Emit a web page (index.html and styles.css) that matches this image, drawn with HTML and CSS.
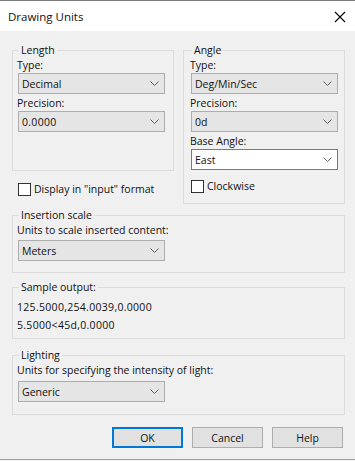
FILE: index.html
```html
<!DOCTYPE html>
<html>
<head>
<meta charset="utf-8">
<link rel="stylesheet" href="styles.css">
</head>
<body>
<div class="window">
  <div class="titlebar">
    <span class="title">Drawing Units</span>
    <svg class="close" width="12" height="12" viewBox="0 0 12 12"><path d="M1 1 L11 11 M11 1 L1 11" stroke="#000" stroke-width="1.1" fill="none"/></svg>
  </div>
  <div class="content">
    <div class="top-row">
      <div class="col">
        <fieldset class="group length">
          <legend>Length</legend>
          <div class="lbl">Type:</div>
          <div class="combo"><span>Decimal</span><svg class="chev" width="9" height="5" viewBox="0 0 9 5"><path d="M0.5 0.5 L4.5 4.5 L8.5 0.5" stroke="#606060" fill="none"/></svg></div>
          <div class="lbl gap">Precision:</div>
          <div class="combo"><span class="num">0.0000</span><svg class="chev" width="9" height="5" viewBox="0 0 9 5"><path d="M0.5 0.5 L4.5 4.5 L8.5 0.5" stroke="#606060" fill="none"/></svg></div>
        </fieldset>
        <div class="check-row left"><span class="checkbox"></span><span>Display in "input" format</span></div>
      </div>
      <fieldset class="group angle">
        <legend>Angle</legend>
        <div class="lbl">Type:</div>
        <div class="combo"><span>Deg/Min/Sec</span><svg class="chev" width="9" height="5" viewBox="0 0 9 5"><path d="M0.5 0.5 L4.5 4.5 L8.5 0.5" stroke="#606060" fill="none"/></svg></div>
        <div class="lbl gap">Precision:</div>
        <div class="combo"><span>0d</span><svg class="chev" width="9" height="5" viewBox="0 0 9 5"><path d="M0.5 0.5 L4.5 4.5 L8.5 0.5" stroke="#606060" fill="none"/></svg></div>
        <div class="lbl gap">Base Angle:</div>
        <div class="combo edit"><span>East</span><svg class="chev" width="9" height="5" viewBox="0 0 9 5"><path d="M0.5 0.5 L4.5 4.5 L8.5 0.5" stroke="#606060" fill="none"/></svg></div>
        <div class="check-row inner"><span class="checkbox"></span><span>Clockwise</span></div>
      </fieldset>
    </div>

    <fieldset class="group wide insertion">
      <legend>Insertion scale</legend>
      <div class="lbl">Units to scale inserted content:</div>
      <div class="combo"><span>Meters</span><svg class="chev" width="9" height="5" viewBox="0 0 9 5"><path d="M0.5 0.5 L4.5 4.5 L8.5 0.5" stroke="#606060" fill="none"/></svg></div>
    </fieldset>

    <fieldset class="group wide sample">
      <legend>Sample output:</legend>
      <div class="sample-line">125.5000,254.0039,0.0000</div>
      <div class="sample-line">5.5000&lt;45d,0.0000</div>
    </fieldset>

    <fieldset class="group wide lighting">
      <legend>Lighting</legend>
      <div class="lbl">Units for specifying the intensity of light:</div>
      <div class="combo"><span>Generic</span><svg class="chev" width="9" height="5" viewBox="0 0 9 5"><path d="M0.5 0.5 L4.5 4.5 L8.5 0.5" stroke="#606060" fill="none"/></svg></div>
    </fieldset>

    <div class="buttons">
      <div class="btn default">OK</div>
      <div class="btn">Cancel</div>
      <div class="btn">Help</div>
    </div>
  </div>
</div>
</body>
</html>
```

FILE: styles.css
```css
html, body {
  margin: 0;
  padding: 0;
  background: #f0f0f0;
}
.window {
  width: 355px;
  height: 460px;
  box-sizing: border-box;
  border-top: 1px solid #7a7a7a;
  border-bottom: 1px solid #a0a0a0;
  background: #f0f0f0;
  font-family: "Open Sans", "Noto Sans", sans-serif;
  font-size: 10.5px;
  color: #111;
  overflow: hidden;
}
.titlebar {
  height: 30px;
  background: #fff;
  display: flex;
  align-items: center;
  justify-content: space-between;
  padding: 0 8px 0 8px;
}
.title {
  font-size: 11.5px;
  line-height: 16px;
  padding-top: 1px;
}
.close {
  display: block;
  margin-right: 1px;
  margin-top: 2px;
}
.content {
  padding: 12px 10px 0 12px;
}
.top-row {
  display: flex;
  gap: 9px;
}
.col {
  display: flex;
  flex-direction: column;
}
.group {
  margin: 0;
  border: 1px solid #dcdcdc;
  box-sizing: border-box;
  min-width: 0;
  width: 162px;
}
.group legend {
  padding: 0 2px;
  line-height: 14px;
  margin-left: 1px;
}
.length {
  height: 128px;
  padding: 1px 4px 0 5px;
}
.angle {
  height: 161px;
  padding: 1px 5px 0 7px;
}
.wide {
  width: 333px;
  padding: 1px 4px 0 5px;
}
.insertion {
  margin-top: 4px;
  height: 65px;
}
.sample {
  margin-top: 7px;
  height: 59px;
}
.lighting {
  margin-top: 9px;
  height: 67px;
}
.lbl {
  line-height: 14px;
  margin-left: -1px;
}
.lbl.gap {
  margin-top: 2px;
}
.combo {
  margin-top: 1px;
  width: 147px;
  height: 21px;
  box-sizing: border-box;
  background: #e5e5e5;
  border: 1px solid #adadad;
  display: flex;
  align-items: center;
  justify-content: space-between;
  padding: 0 5px 0 3px;
}
.combo.edit {
  background: #fff;
  border-color: #7a7a7a;
}
.combo .chev {
  display: block;
}
.num {
  letter-spacing: 0.3px;
}
.insertion .combo, .lighting .combo {
  margin-top: 3px;
}
.lighting .combo {
  margin-top: 4px;
}
.check-row {
  display: flex;
  align-items: center;
  gap: 3px;
  line-height: 14px;
}
.check-row.left {
  margin-top: 11px;
  margin-left: 6px;
}
.check-row.inner {
  margin-top: 9px;
}
.checkbox {
  width: 13px;
  height: 13px;
  box-sizing: border-box;
  border: 1px solid #333;
  background: #fff;
}
.sample-line {
  line-height: 14px;
  margin-left: -1px;
  margin-top: 5px;
  letter-spacing: 0.3px;
}
.sample-line + .sample-line {
  margin-top: 4px;
}
.buttons {
  display: flex;
  justify-content: flex-end;
  gap: 9px;
  margin-top: 12px;
  padding-right: 2px;
}
.btn {
  width: 71px;
  height: 21px;
  box-sizing: border-box;
  background: #e1e1e1;
  border: 1px solid #adadad;
  display: flex;
  align-items: center;
  justify-content: center;
  line-height: 14px;
}
.btn.default {
  border: 1px solid #0078d7;
  box-shadow: inset 0 0 0 1px #0078d7;
}
```
